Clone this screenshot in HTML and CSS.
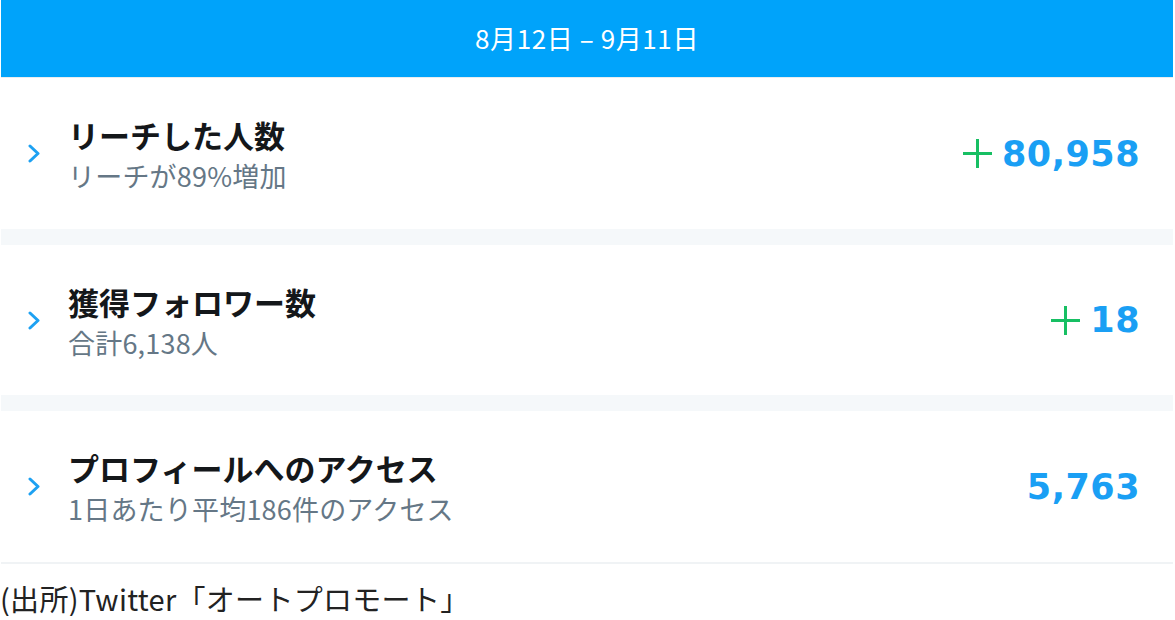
FILE: index.html
```html
<!DOCTYPE html>
<html lang="ja">
<head>
<meta charset="utf-8">
<title>オートプロモート</title>
<link rel="stylesheet" href="styles.css">
</head>
<body>
<div class="panel">
  <div class="header">8月12日 – 9月11日</div>

  <div class="row row-first">
    <svg class="chev" width="12" height="19" viewBox="0 0 12 19"><path d="M2 2 L10 9.5 L2 17" fill="none" stroke="#1da1f2" stroke-width="3" stroke-linecap="round" stroke-linejoin="round"/></svg>
    <div class="texts">
      <div class="title">リーチした人数</div>
      <div class="sub">リーチが89%増加</div>
    </div>
    <div class="value">
      <svg class="plus" width="29" height="29" viewBox="0 0 29 29"><path d="M14.5 0 V29 M0 14.5 H29" stroke="#17bf63" stroke-width="3"/></svg>
      <span class="num">80,958</span>
    </div>
  </div>
  <div class="sep"></div>

  <div class="row">
    <svg class="chev" width="12" height="19" viewBox="0 0 12 19"><path d="M2 2 L10 9.5 L2 17" fill="none" stroke="#1da1f2" stroke-width="3" stroke-linecap="round" stroke-linejoin="round"/></svg>
    <div class="texts">
      <div class="title">獲得フォロワー数</div>
      <div class="sub">合計6,138人</div>
    </div>
    <div class="value">
      <svg class="plus" width="29" height="29" viewBox="0 0 29 29"><path d="M14.5 0 V29 M0 14.5 H29" stroke="#17bf63" stroke-width="3"/></svg>
      <span class="num">18</span>
    </div>
  </div>
  <div class="sep"></div>

  <div class="row row-last">
    <svg class="chev" width="12" height="19" viewBox="0 0 12 19"><path d="M2 2 L10 9.5 L2 17" fill="none" stroke="#1da1f2" stroke-width="3" stroke-linecap="round" stroke-linejoin="round"/></svg>
    <div class="texts">
      <div class="title">プロフィールへのアクセス</div>
      <div class="sub">1日あたり平均186件のアクセス</div>
    </div>
    <div class="value">
      <span class="num">5,763</span>
    </div>
  </div>
</div>
<p class="caption">(出所)Twitter「オートプロモート」</p>
</body>
</html>
```

FILE: styles.css
```css
html, body {
  margin: 0;
  padding: 0;
  background: #ffffff;
}
body {
  font-family: "Noto Sans CJK JP", "Noto Sans", sans-serif;
  color: #14171a;
}
.panel {
  margin-left: 1px;
  width: 1172px;
}
.header {
  height: 77px;
  background: #00a3fa;
  border-bottom: 1px solid #e8edf0;
  color: #ffffff;
  font-size: 26px;
  letter-spacing: 0.6px;
  line-height: 76px;
  text-align: center;
}
.row {
  height: 150px;
  display: flex;
  align-items: center;
  padding: 0 33px 0 27px;
  background: #ffffff;
}
.row-first { height: 151px; }
.row-last {
  height: 151px;
  border-bottom: 2px solid #f0f3f5;
}
.sep {
  height: 16px;
  background: #f5f8fa;
}
.chev {
  flex: none;
  display: block;
}
.texts {
  flex: 1;
  margin-left: 28px;
  margin-top: 2px;
  display: flex;
  flex-direction: column;
  gap: 7px;
}
.title {
  font-size: 31px;
  font-weight: 700;
  line-height: 36px;
  color: #14171a;
}
.sub {
  font-size: 27px;
  line-height: 32px;
  color: #657786;
  letter-spacing: 0.2px;
}
.value {
  display: flex;
  align-items: center;
  gap: 10px;
}
.plus {
  display: block;
  flex: none;
}
.num {
  font-family: "DejaVu Sans", sans-serif;
  font-weight: 700;
  font-size: 35px;
  line-height: 40px;
  color: #1a9ff4;
  letter-spacing: 0.5px;
}
.caption {
  margin: 16px 0 0 0;
  font-size: 29px;
  line-height: 36px;
  color: #222222;
  letter-spacing: 0.3px;
}
```
